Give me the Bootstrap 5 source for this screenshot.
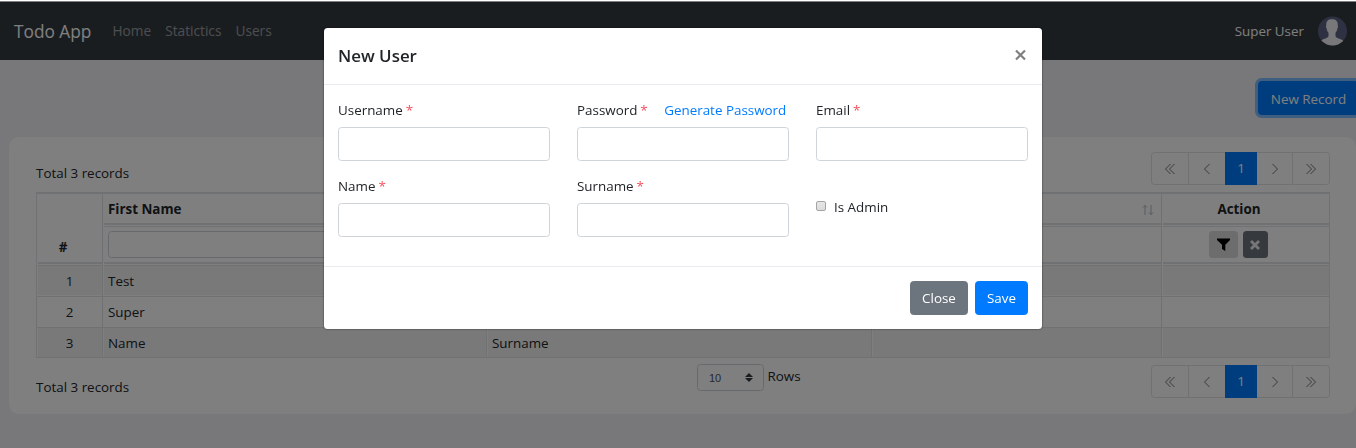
<!DOCTYPE html>
<html lang="en">
<head>
<meta charset="utf-8">
<meta name="viewport" content="width=device-width, initial-scale=1">
<title>Todo App</title>
<link href="https://cdn.jsdelivr.net/npm/bootstrap@5.3.0/dist/css/bootstrap.min.css" rel="stylesheet">
<style>
html{font-size:14px}
body{font-family:"Open Sans","Noto Sans",sans-serif;font-size:13.4px;line-height:21px;background:#f0f0f4;color:#212529;height:448px;overflow:hidden;border-top:2px solid #fff}
.topbar{height:58px;background:#343a40;padding:0 9px 0 14px}
.topbar .navbar-brand{font-size:17.3px;margin-right:21px;padding:0;color:#fff}
.topbar .nav-link{padding:0 0 1px;margin-right:14px;color:rgba(255,255,255,.5);font-size:13.7px}
.avatar{width:30px;height:30px;margin-left:13px}
.tools{height:77px;padding-top:21px}
.btn{--bs-btn-font-size:13.4px;--bs-btn-border-radius:3.5px;--bs-btn-line-height:21px;--bs-btn-padding-y:5.5px;--bs-btn-padding-x:10.5px;height:34px}
.btn-primary{--bs-btn-bg:#007bff;--bs-btn-border-color:#007bff}
.btn-new{width:101px;margin-right:-3px;padding:6.500px 10.500px 4.500px;box-shadow:0 0 0 3px #80bdff;white-space:nowrap}
.modal-footer .btn{padding-left:0;padding-right:0;width:58px}
.modal-footer .btn-primary{width:53px}
.panel{margin:0 0 0 9px;height:277px;background:#fff;border-radius:10px;padding:15px 26px 0 27px}
.pager-bar{height:33px}
.page-link{padding:0;height:33px;width:38px;display:flex;align-items:center;justify-content:center;color:#6c757d;border-color:#dee2e6;font-size:13.4px}
.pagination{--bs-pagination-border-radius:3.5px}
.page-item:nth-child(4) .page-link{width:37px}
.active>.page-link{width:32px;background:#007bff;border-color:#007bff;color:#fff}
.page-link svg{width:12px;height:12px}
svg.ln{fill:none;stroke:currentColor}
.grid-table{table-layout:fixed;border-collapse:separate;border-spacing:0;width:1294px;margin:7px 0 0;border-left:1px solid #dee2e6;border-top:2px solid #dee2e6}
.grid-table td,.grid-table th{padding:0 5px;border-right:1px solid #dee2e6;border-bottom:1px solid #dee2e6;box-shadow:inset 1px 0 #fff}
.grid-table td{height:31px;box-shadow:inset 1px -1px #fff}
.grid-table tr:last-child td{height:30px;padding-top:1px;box-shadow:inset 1px 0 #fff}
.grid-table tbody tr:nth-child(odd) td{background:#f2f2f2}
.grid-table .h1r th{height:29px;border-bottom:0;padding-top:2px}
.grid-table .h2r th{height:35px;border-bottom:0}
.grid-table .h2r .num{padding-top:5px}
.rule th{padding:0!important;height:4px!important;border-bottom:0!important;background:linear-gradient(#dee2e6 2px,#fff 2px 3px,#dee2e6 3px)}
.rule th.blank{background:none}
.act{padding-right:18px!important}
.flt{height:27px;border-radius:3.5px;border-color:#ced4da;margin-right:5px}
.mini{height:27px;padding:0;display:inline-flex;align-items:center;justify-content:center}
.mini-filter{width:29px;margin-right:1px;background:#dadada}
.mini-clear{width:25px;background:#6c757d}
.rows-box{width:200px;margin-right:254px}
.rows-select{width:67px;height:27px;margin-top:-1px;border:1px solid #ced4da;border-radius:3.5px;font:11px "Liberation Sans",sans-serif;color:#495057;padding:0 10px 0 11px}
.modal-dialog{width:718px;max-width:718px;margin:28px 0 0 324px}
.modal-content{border:0;border-radius:3.5px;height:301px;box-shadow:0 0 2px rgba(0,0,0,.7)}
.modal-header{height:57px;padding:0 14px;border-color:#e9ecef}
.modal-title{font-size:16.9px;font-weight:600}
.x-close{border:0;background:none;padding:0 0 3px;color:#7f7f7f;line-height:1}
.modal-body{height:181px;padding:15px 14px 0;flex:none}
.modal-body .row{--bs-gutter-x:27px;--bs-gutter-y:0}
.modal-body .col-4{height:76px}
.modal-body label{display:block;height:27px;white-space:nowrap}
.modal-body .form-control{height:34px;border-radius:3.5px;border-color:#ced4da}
.req{color:#f5525f;margin-left:-.5px}
.gen{color:#007bff;text-decoration:none;margin-left:13px}
.modal-footer{height:63px;padding:0 14px;gap:7px;border-color:#e9ecef}
.modal-footer>*{margin:0}
.chk{width:10px;height:10px;border:1px solid #a5a5a5;border-radius:2px;background:linear-gradient(#e6e6e6,#dcdcdc);margin-right:8px}
.modal-backdrop{top:1px}
</style>
</head>
<body>
<nav class="topbar d-flex align-items-center">
  <a class="navbar-brand">Todo App</a>
  <a class="nav-link">Home</a><a class="nav-link">Statictics</a><a class="nav-link">Users</a>
  <span class="ms-auto text-white">Super User</span>
  <svg class="avatar" viewBox="0 0 30 30"><defs><clipPath id="c"><circle cx="15.500" cy="15" r="14.500"/></clipPath></defs><g clip-path="url(#c)"><rect width="30" height="30" fill="#5c6284"/><path fill="#f0f0f4" d="M15 3.200c4.500 0 6 2.300 5.700 6.200c.5.500.3 2.500-.4 3.300c-.3 2-1 3-1.800 4v3.500c1 2 4.500 2.300 7.500 4.300v6H4v-6c3-2 6.500-2.300 7.500-4.300v-3.500c-.8-1-1.500-2-1.800-4c-.7-.8-.9-2.800-.4-3.300C9 5.500 10.500 3.200 15 3.200z"/></g></svg>
</nav>
<div class="tools d-flex justify-content-end overflow-hidden"><button class="btn btn-primary btn-new">New Record</button></div>
<main class="panel">
  <div class="pager-bar d-flex justify-content-between">
    <span class="pt-2 mt-1">Total 3 records</span>
    <ul class="pagination m-0">
      <li class="page-item"><a class="page-link"><svg class="ln" viewBox="0 0 12 12"><path d="M6.500 1 1.500 6l5 5M10.500 1 5.500 6l5 5"/></svg></a></li>
      <li class="page-item"><a class="page-link"><svg class="ln" viewBox="0 0 12 12"><path d="M8.500 1 3.500 6l5 5"/></svg></a></li>
      <li class="page-item active"><a class="page-link">1</a></li>
      <li class="page-item"><a class="page-link"><svg class="ln" viewBox="0 0 12 12"><path d="M3.500 1 8.500 6l-5 5"/></svg></a></li>
      <li class="page-item"><a class="page-link"><svg class="ln" viewBox="0 0 12 12"><path d="M1.500 1 6.500 6l-5 5M5.500 1 10.500 6l-5 5"/></svg></a></li>
    </ul>
  </div>
  <table class="grid-table">
    <colgroup><col style="width:66px"><col style="width:384px"><col style="width:385px"><col style="width:290px"><col style="width:168px"></colgroup>
    <thead>
      <tr class="h1r"><th></th><th>First Name</th><th></th><th class="text-end pe-2"><svg class="ln" width="12" height="12" viewBox="0 0 12 12" style="color:#adb5bd"><path d="M3 11V1.500M1 3.500l2-2 2 2M9 1v9.500M7 8.500l2 2 2-2"/></svg></th><th class="text-center act">Action</th></tr>
      <tr class="rule"><th class="blank"></th><th></th><th></th><th></th><th></th></tr>
      <tr class="h2r"><th class="text-center act num">#</th><th><input class="form-control flt" aria-label="First name filter"></th><th></th><th></th>
        <th><div class="d-flex justify-content-center gap-1 pe-3"><span class="btn mini mini-filter"><svg width="13" height="13" viewBox="0 0 13 13"><path d="M0 .5h13v1.500L8.300 6.800V13L5 11V6.800L0 2z"/></svg></span><span class="btn mini mini-clear"><svg class="ln" width="10" height="10" viewBox="0 0 10 10" style="color:#eee"><path stroke-width="2.800" d="M1 1l8 8M9 1 1 9"/></svg></span></div></th></tr>
      <tr class="rule"><th></th><th></th><th></th><th></th><th></th></tr>
    </thead>
    <tbody>
      <tr><td class="text-center">1</td><td>Test</td><td></td><td></td><td></td></tr>
      <tr><td class="text-center">2</td><td>Super</td><td></td><td></td><td></td></tr>
      <tr><td class="text-center">3</td><td>Name</td><td>Surname</td><td></td><td></td></tr>
    </tbody>
  </table>
  <div class="d-flex mt-2 pager-bar">
    <span class="pt-2 mt-1 me-auto"><span class="d-block" style="padding-top:1px">Total 3 records</span></span>
    <div class="d-flex rows-box"><span class="rows-select d-flex align-items-center justify-content-between">10<svg width="8" height="9" viewBox="0 0 8 9" fill="#343a40"><path d="M4 0l4 4H0zM4 9l4-4H0z"/></svg></span><span class="ms-1" style="padding-top:1px">Rows</span></div>
    <ul class="pagination m-0">
      <li class="page-item"><a class="page-link"><svg class="ln" viewBox="0 0 12 12"><path d="M6.500 1 1.500 6l5 5M10.500 1 5.500 6l5 5"/></svg></a></li>
      <li class="page-item"><a class="page-link"><svg class="ln" viewBox="0 0 12 12"><path d="M8.500 1 3.500 6l5 5"/></svg></a></li>
      <li class="page-item active"><a class="page-link">1</a></li>
      <li class="page-item"><a class="page-link"><svg class="ln" viewBox="0 0 12 12"><path d="M3.500 1 8.500 6l-5 5"/></svg></a></li>
      <li class="page-item"><a class="page-link"><svg class="ln" viewBox="0 0 12 12"><path d="M1.500 1 6.500 6l-5 5M5.500 1 10.500 6l-5 5"/></svg></a></li>
    </ul>
  </div>
</main>
<div class="modal-backdrop show"></div>
<div class="modal d-block" tabindex="-1">
  <div class="modal-dialog"><div class="modal-content">
    <div class="modal-header"><h5 class="modal-title">New User</h5><button class="x-close" aria-label="Close"><svg class="ln" width="15" height="12" viewBox="0 0 15 12"><path stroke-width="2.200" d="M3 1.500l9 9M12 1.500l-9 9"/></svg></button></div>
    <div class="modal-body"><div class="row">
      <div class="col-4"><label>Username <span class="req">*</span></label><input class="form-control" aria-label="Username"></div>
      <div class="col-4"><label>Password <span class="req">*</span> <a class="gen">Generate Password</a></label><input class="form-control" aria-label="Password"></div>
      <div class="col-4"><label>Email <span class="req">*</span></label><input class="form-control" aria-label="Email"></div>
      <div class="col-4"><label>Name <span class="req">*</span></label><input class="form-control" aria-label="Name"></div>
      <div class="col-4"><label>Surname <span class="req">*</span></label><input class="form-control" aria-label="Surname"></div>
      <div class="col-4 d-flex align-items-start pt-4"><span class="chk mt-1"></span><span>Is Admin</span></div>
    </div></div>
    <div class="modal-footer"><button class="btn btn-secondary">Close</button><button class="btn btn-primary">Save</button></div>
  </div></div>
</div>
<script src="https://cdn.jsdelivr.net/npm/bootstrap@5.3.0/dist/js/bootstrap.bundle.min.js"></script>
</body>
</html>
